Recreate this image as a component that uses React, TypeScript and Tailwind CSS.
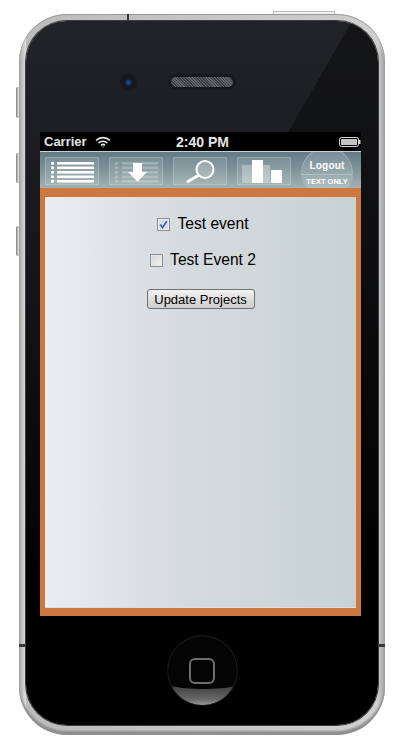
const SANS = { fontFamily: '"Liberation Sans", Arial, sans-serif' };

const ROWS = [5, 9.5, 14, 18.5, 23];

function SideButton({ className }: { className: string }) {
  return (
    <div
      className={`absolute left-[-3px] w-[3px] rounded-l-[2px] border-l border-[#8f8f8f] bg-[linear-gradient(to_right,#a5a5a5,#ececec)] ${className}`}
    />
  );
}

function IconFrame() {
  return <rect x="0.5" y="0.5" width="53" height="27" fill="#ffffff" fillOpacity="0.1" stroke="#ffffff" strokeOpacity="0.25" />;
}

function ListIcon() {
  return (
    <svg width="54" height="28" viewBox="0 0 54 28">
      <IconFrame />
      {ROWS.map((y) => (
        <g key={y} fill="#ffffff">
          <rect x="6" y={y} width="3" height="2.6" />
          <rect x="12" y={y} width="37" height="2.6" />
        </g>
      ))}
    </svg>
  );
}

function DownloadIcon() {
  return (
    <svg width="54" height="28" viewBox="0 0 54 28">
      <IconFrame />
      {ROWS.map((y) => (
        <g key={y} fill="#ffffff" fillOpacity="0.25">
          <rect x="6" y={y} width="3" height="2.6" />
          <rect x="13" y={y} width="36" height="2.6" />
        </g>
      ))}
      <path d="M24 6h9v9h5l-9.5 9.5L19 15h5z" fill="#ffffff" />
    </svg>
  );
}

function SearchIcon() {
  return (
    <svg width="54" height="28" viewBox="0 0 54 28">
      <IconFrame />
      <circle cx="32" cy="12.5" r="8.5" fill="#ffffff" fillOpacity="0.2" stroke="#ffffff" strokeWidth="2" />
      <path d="M25.5 18.5 15 24.5" stroke="#ffffff" strokeWidth="3" strokeLinecap="round" />
    </svg>
  );
}

function ChartIcon() {
  return (
    <svg width="54" height="28" viewBox="0 0 54 28">
      <IconFrame />
      <rect x="5" y="8" width="10" height="18" fill="#ffffff" fillOpacity="0.3" />
      <rect x="15" y="3" width="11" height="23" fill="#ffffff" />
      <rect x="26" y="8" width="7" height="18" fill="#ffffff" fillOpacity="0.35" />
      <rect x="34" y="13" width="11" height="13" fill="#ffffff" />
    </svg>
  );
}

function Wifi() {
  return (
    <svg width="16" height="12" viewBox="0 0 16 12" fill="none" stroke="#e6e6e6" strokeWidth="1.6">
      <path d="M1 4.5a10 10 0 0 1 14 0" />
      <path d="M3.5 7a6.5 6.5 0 0 1 9 0" />
      <path d="M6 9.3a3 3 0 0 1 4 0" />
      <circle cx="8" cy="10.8" r="0.6" fill="#e6e6e6" stroke="none" />
    </svg>
  );
}

function Battery() {
  return (
    <svg width="22" height="10" viewBox="0 0 22 10">
      <rect x="0.5" y="0.5" width="19" height="9" rx="2" fill="none" stroke="#d8d8d8" />
      <rect x="2" y="2" width="16" height="6" rx="0.5" fill="#c4c4c4" />
      <rect x="20" y="3" width="1.5" height="4" fill="#d8d8d8" />
    </svg>
  );
}

function Checkbox({ checked }: { checked?: boolean }) {
  return (
    <span
      className={
        checked
          ? "flex size-[13px] items-center justify-center border border-[#8e8f8f] bg-[#d5dcee] shadow-[inset_0_0_0_1px_#eceef5]"
          : "flex size-[13px] items-center justify-center border border-[#8e8f8f] bg-[linear-gradient(135deg,#d4d4d4,#f4f4f4)] shadow-[inset_0_0_0_1px_#e4e5e5]"
      }
    >
      {checked ? (
        <svg width="9" height="9" viewBox="0 0 9 9">
          <path d="M1.2 4.5 3.5 7.5 7.8 1.2" fill="none" stroke="#4a5fa8" strokeWidth="1.7" />
        </svg>
      ) : null}
    </span>
  );
}

export default function App() {
  return (
    <div style={SANS} className="h-[750px] w-[402px] overflow-hidden bg-white pl-[19px] pt-[14px]">
      <div className="relative h-[721px] w-[366px] rounded-[48px] bg-[linear-gradient(to_right,#a8a8a8,#e2e2e2_2%,#bcbcbc_2%,#cfcfcf_98%,#a0a0a0)] pl-[7px] pt-[7px] shadow-[inset_0_-4px_2px_#8f8f8f,inset_0_1px_0_#9a9a9a]">
        <SideButton className="top-[73px] h-[31px]" />
        <SideButton className="top-[139px] h-[30px]" />
        <SideButton className="top-[212px] h-[30px]" />
        <div className="absolute right-[50px] top-[-3px] h-[3px] w-[62px] rounded-t-[1px] border border-b-0 border-[#bbbbbb] bg-[#f0f0f0]" />
        <div className="absolute left-[108px] top-0 h-[7px] w-[2px] bg-[#3a3a3a]" />
        <div className="absolute left-0 top-[630px] h-[3px] w-[7px] bg-[#3a3a3a]" />
        <div className="absolute right-0 top-[630px] h-[3px] w-[7px] bg-[#3a3a3a]" />

        <div className="relative flex h-[704px] w-[352px] flex-col rounded-[41px] bg-[linear-gradient(120deg,transparent_43%,rgba(0,0,0,0.4)_43%),linear-gradient(to_bottom,#222327_0px,#1d1e22_110px,#141518_260px,#000000_580px)] shadow-[0_0_0_1px_#3c3c3c]">
          <div className="flex h-[111px] shrink-0 items-start justify-center gap-[31px] pr-[48px] pt-[53px]">
            <div className="flex size-[17px] items-center justify-center rounded-full bg-[#17181b]">
              <div className="size-[7px] rounded-full bg-[radial-gradient(circle,#1d4fb0,#10243f_70%)]" />
            </div>
            <div className="flex h-[16px] w-[68px] items-center justify-center rounded-full bg-[#17181b]">
              <div className="h-[10px] w-[62px] rounded-full bg-[repeating-linear-gradient(45deg,#3b3c40_0px,#3b3c40_1px,#66676b_1px,#66676b_2px)]" />
            </div>
          </div>

          <div className="ml-[14px] flex h-[484px] w-[321px] shrink-0 flex-col">
            <div className="flex h-[19px] shrink-0 items-center justify-between bg-black pl-[4px] text-[#e4e4e4]">
              <div className="flex w-[110px] items-center gap-[8px] text-[13px] font-bold leading-none">
                <span>Carrier</span>
                <Wifi />
              </div>
              <span className="text-[14px] font-bold leading-none">2:40 PM</span>
              <div className="flex w-[110px] justify-end">
                <Battery />
              </div>
            </div>

            <div className="flex h-[37px] shrink-0 items-start gap-[10px] overflow-hidden border-t border-[#c4d0d3] bg-[linear-gradient(to_bottom,#627b85,#7f959b_50%,#a3b1b4)] pl-[5px] pt-[5px]">
              <ListIcon />
              <DownloadIcon />
              <SearchIcon />
              <ChartIcon />
              <div className="-mt-[10px] flex size-[52px] shrink-0 flex-col items-center rounded-full border border-[#a4b4b8] bg-white/15 text-white">
                <span className="pt-[12px] text-[10px] font-bold leading-[11px] tracking-[0.2px]">Logout</span>
                <span className="mt-[3px] w-full border-t border-[#b4c0c3] pt-[2px] text-center text-[7.5px] font-bold leading-[10px]">
                  TEXT ONLY
                </span>
              </div>
            </div>

            <div className="flex min-h-0 flex-1 bg-[#cc783f] pb-[8px] pl-[5px] pr-[5px] pt-[9px]">
              <div className="flex flex-1 flex-col items-center border-b border-[#dddddd] bg-[linear-gradient(to_right,#ebedf1,#d6dcdf_40%,#c8d2d3)] pt-[18px] text-[15.6px] leading-[18px] text-black">
                <label className="ml-[5px] flex h-[18px] items-center gap-[7px]">
                  <Checkbox checked />
                  <span>Test event</span>
                </label>
                <label className="ml-[5px] mt-[18px] flex h-[18px] items-center gap-[7px]">
                  <Checkbox />
                  <span>Test Event 2</span>
                </label>
                <button
                  type="button"
                  className="mt-[20px] flex h-[20px] w-[108px] items-center justify-center rounded-[3px] border border-[#707070] bg-[linear-gradient(to_bottom,#f4f4f4,#dddddd_50%,#cfcfcf)] text-[13px] leading-none text-black"
                >
                  Update Projects
                </button>
              </div>
            </div>
          </div>

          <div className="flex flex-1 items-start justify-center pt-[19px]">
            <div className="relative flex size-[71px] items-center justify-center overflow-hidden rounded-full border border-[#161616] bg-[linear-gradient(to_bottom,#3a3a3a_70%,#6a6a6a_92%,#9a9a9a)]">
              <div className="absolute left-[-10px] top-0 h-[53px] w-[91px] rounded-b-[45px_10px] bg-[#040404]" />
              <div className="relative size-[26px] rounded-[6px] border-2 border-[#6e6e6e]" />
            </div>
          </div>
        </div>
      </div>
    </div>
  );
}
